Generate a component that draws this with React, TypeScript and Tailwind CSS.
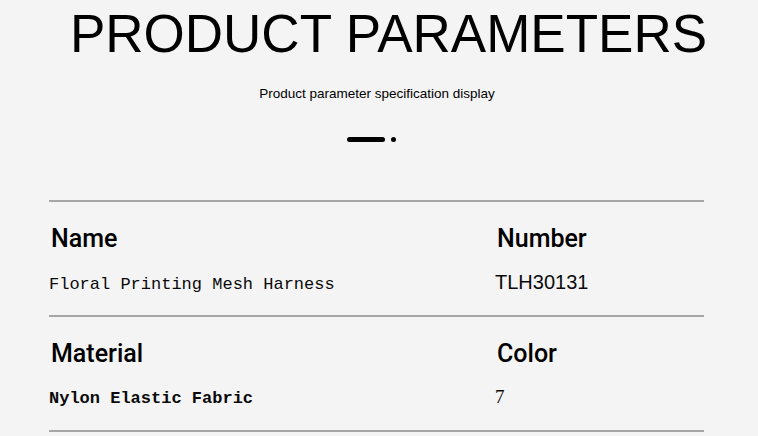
import React from 'react';

interface Param {
  label: string;
  value: string;
  valueFont: string;
}

const rows: Param[][] = [
  [
    { label: 'Name', value: 'Floral Printing Mesh Harness', valueFont: "text-[17px] font-['Liberation_Mono',monospace]" },
    { label: 'Number', value: 'TLH30131', valueFont: "text-[20px] font-['Liberation_Sans',Arial,sans-serif]" },
  ],
  [
    { label: 'Material', value: 'Nylon Elastic Fabric', valueFont: "text-[17px] font-['Liberation_Mono',monospace] font-bold" },
    { label: 'Color', value: '7', valueFont: "text-[19px] font-['Liberation_Serif',serif]" },
  ],
];

const App: React.FC = () => {
  return (
    <div className="min-h-screen w-full bg-[#f4f4f4] font-['Liberation_Sans',Arial,sans-serif] text-black">
      <h1 className="pt-[7px] pl-[19px] text-center text-[53px] leading-none font-normal">
        PRODUCT PARAMETERS
      </h1>
      <p className="mt-[27px] pr-[4px] text-center text-[13.5px] leading-none">Product parameter specification display</p>
      <div className="mt-[36px] flex items-center justify-center gap-[6px] pr-[15px]">
        <span className="block h-[5px] w-[38px] rounded-full bg-black" />
        <span className="block h-[5px] w-[5px] rounded-full bg-black" />
      </div>

      <div className="ml-[49px] mt-[58px] w-[655px]">
        {rows.map((row, i) => (
          <div key={i} className="h-[115px] border-t-2 border-[#a6a6a6]">
            <div className="mt-[24px] flex">
              {row.map((p, j) => (
                <div
                  key={p.label}
                  className={`${j === 0 ? 'w-[448px] pl-[2px]' : 'flex-1'} text-[25px] leading-none font-['Roboto','Liberation_Sans',sans-serif] font-medium text-black`}
                >
                  {p.label}
                </div>
              ))}
            </div>
            <div className="mt-[19px] flex items-baseline">
              {row.map((p, j) => (
                <div key={p.value} className={`${j === 0 ? 'w-[446px]' : 'flex-1'} leading-[24px] text-[#0a0a0a] ${p.valueFont}`}>
                  {p.value}
                </div>
              ))}
            </div>
          </div>
        ))}
        <div className="border-t-2 border-[#a6a6a6]" />
      </div>
    </div>
  );
};

export default App;
